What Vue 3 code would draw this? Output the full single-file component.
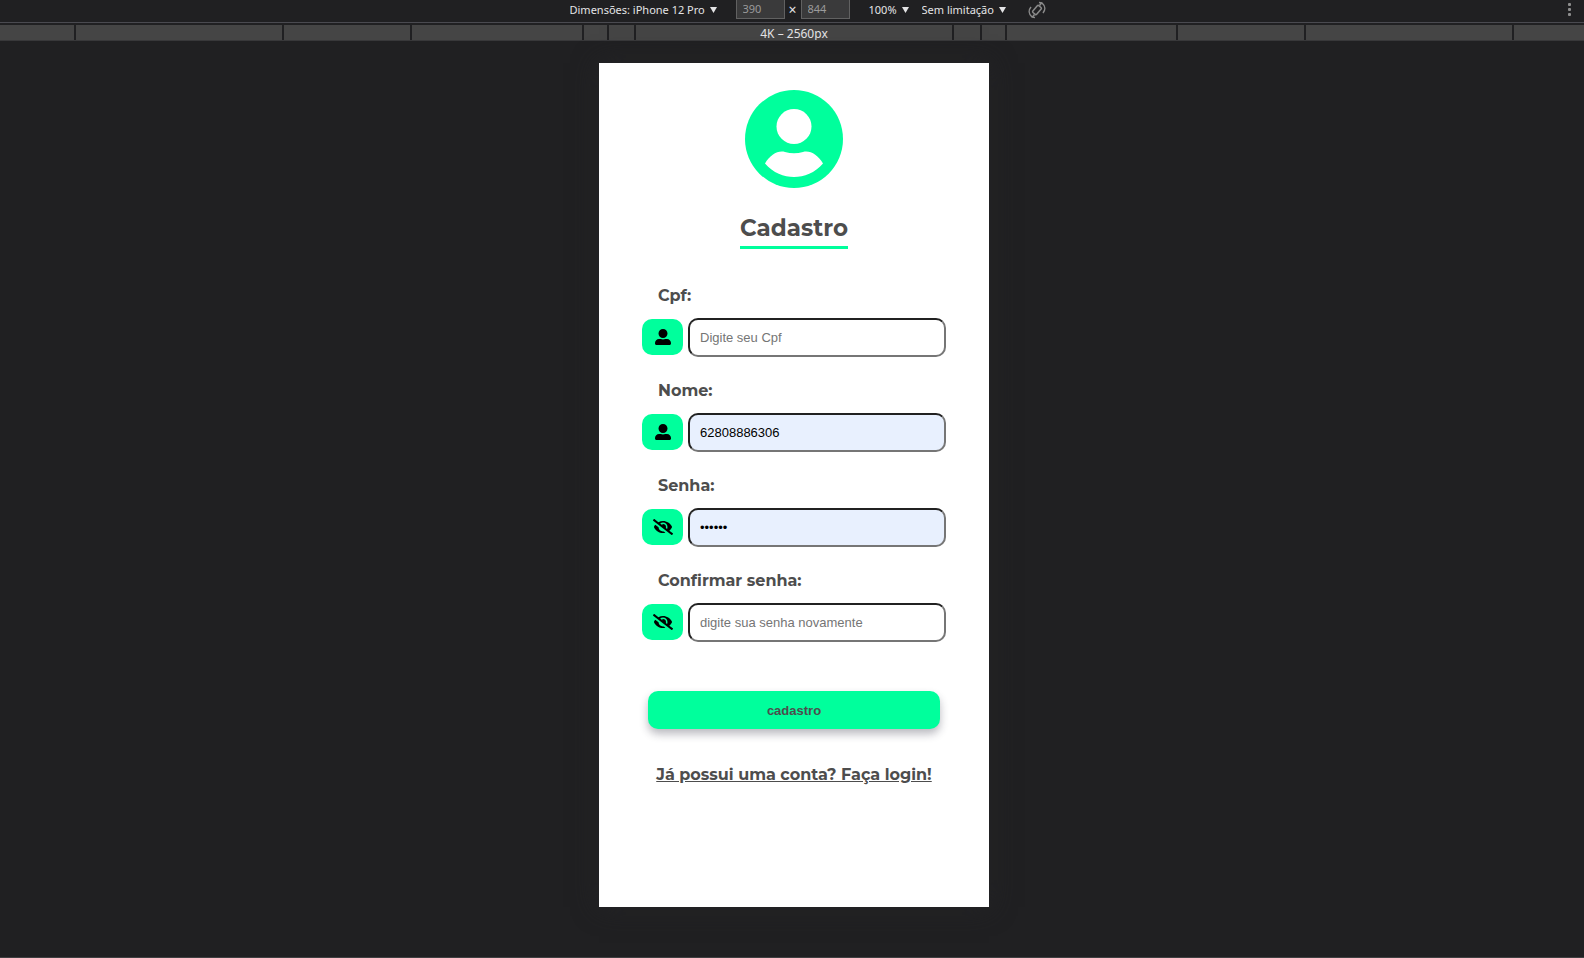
<script setup>
import { ref } from 'vue'

const widthPx = ref('390')
const heightPx = ref('844')

const fields = ref([
  { id: 'cpf', label: 'Cpf:', type: 'text', icon: 'user', placeholder: 'Digite seu Cpf', value: '', filled: false },
  { id: 'nome', label: 'Nome:', type: 'text', icon: 'user', placeholder: '', value: '62808886306', filled: true },
  { id: 'senha', label: 'Senha:', type: 'password', icon: 'eye', placeholder: '', value: '123456', filled: true },
  { id: 'confirmar', label: 'Confirmar senha:', type: 'password', icon: 'eye', placeholder: 'digite sua senha novamente', value: '', filled: false },
])
</script>

<template>
  <div class="devtools">
    <header class="toolbar">
      <div class="tools">
        <label class="drop device">
          <select aria-label="Dimensões"><option>Dimensões: iPhone 12 Pro</option></select>
          <svg class="arrow" viewBox="0 0 7 6"><path d="M0 0h7L3.5 6z" /></svg>
        </label>
        <div class="size">
          <input v-model="widthPx" aria-label="Largura" />
          <span class="times">×</span>
          <input v-model="heightPx" aria-label="Altura" />
        </div>
        <label class="drop zoom">
          <select aria-label="Zoom"><option>100%</option></select>
          <svg class="arrow" viewBox="0 0 7 6"><path d="M0 0h7L3.5 6z" /></svg>
        </label>
        <label class="drop throttle">
          <select aria-label="Limitação"><option>Sem limitação</option></select>
          <svg class="arrow" viewBox="0 0 7 6"><path d="M0 0h7L3.5 6z" /></svg>
        </label>
        <button class="rotate" aria-label="Girar">
          <svg viewBox="0 0 18 18" fill="none" stroke="#8a8a8a" stroke-width="1.5">
            <rect x="6.500" y="4.500" width="5" height="9" rx="1" transform="rotate(40 9 9)" />
            <path d="M3 6C0.500 9 0.500 13 4 16l3 0.500M4 16.500L6.500 13.500M15 12c2.500-3 2.500-7-1-10l-3-0.500M14 1.500L11.500 4.500" />
          </svg>
        </button>
      </div>
      <button class="more" aria-label="Mais opções"><i></i><i></i><i></i></button>
    </header>

    <div class="ruler">
      <span v-for="n in 13" :key="n">{{ n === 7 ? '4K – 2560px' : '' }}</span>
    </div>

    <main class="stage">
      <section class="phone">
        <svg class="avatar" viewBox="0 0 98 98">
          <circle cx="49" cy="49" r="49" fill="#00ff9c" />
          <circle cx="49" cy="36.500" r="17.500" fill="#fff" />
          <path d="M20 73.500C25 65 33 60 40 62q9 2.600 18 0c7-2 15 3 20 11.500C70 83 59 87 49 87S28 83 20 73.500z" fill="#fff" />
        </svg>
        <h1>Cadastro</h1>

        <form @submit.prevent>
          <div v-for="f in fields" :key="f.id" class="field">
            <label :for="f.id">{{ f.label }}</label>
            <div class="row">
              <span class="badge">
                <svg v-if="f.icon === 'user'" class="user" viewBox="0 0 512 512">
                  <path d="M256 288c79.500 0 144-64.500 144-144S335.500 0 256 0 112 64.500 112 144s64.500 144 144 144zm128 32h-55.100c-22.200 10.200-46.900 16-72.900 16s-50.600-5.800-72.900-16H128C57.300 320 0 377.300 0 448v16c0 26.500 21.500 48 48 48h416c26.500 0 48-21.500 48-48v-16c0-70.700-57.300-128-128-128z" />
                </svg>
                <svg v-else class="eye" viewBox="0 0 640 512">
                  <path d="M320 400c-75.850 0-137.250-58.710-142.900-133.110L72.200 185.820c-13.790 17.300-26.480 35.590-36.720 55.590a32.350 32.350 0 0 0 0 29.190C89.710 376.410 197.070 448 320 448c26.910 0 52.870-4 77.890-10.460L346 397.390a144.130 144.130 0 0 1-26 2.610zm313.820 58.100l-110.550-85.440a331.250 331.250 0 0 0 81.250-102.070 32.350 32.350 0 0 0 0-29.190C550.290 135.590 442.930 64 320 64a308.150 308.150 0 0 0-147.320 37.700L45.460 3.370A16 16 0 0 0 23 6.180L3.370 31.450A16 16 0 0 0 6.180 53.900l588.360 454.730a16 16 0 0 0 22.460-2.810l19.640-25.270a16 16 0 0 0-2.820-22.450zm-183.720-142l-39.300-30.380A94.750 94.750 0 0 0 416 256a94.760 94.760 0 0 0-121.310-92.210A47.650 47.650 0 0 1 304 192a46.640 46.640 0 0 1-1.540 10l-73.610-56.890A142.310 142.310 0 0 1 320 112a143.920 143.920 0 0 1 144 144c0 21.630-5.290 41.790-13.900 60.110z" />
                </svg>
              </span>
              <input
                :id="f.id"
                v-model="f.value"
                :type="f.type"
                :placeholder="f.placeholder"
                :class="{ filled: f.filled }"
                autocomplete="off"
              />
            </div>
          </div>
          <button class="submit" type="submit">cadastro</button>
        </form>

        <a class="login" href="#login">Já possui uma conta? Faça login!</a>
      </section>
    </main>
  </div>
</template>

<style>
body {
  background: #202022;
}
</style>

<style scoped>
* {
  box-sizing: border-box;
}
.devtools {
  display: flex;
  flex-direction: column;
  min-height: 100vh;
  background: #202022;
  border-bottom: 1px solid #404042;
  font-family: "Segoe UI", "Noto Sans", sans-serif;
  font-size: 12px;
  color: #e4e4e6;
}
button {
  border: 0;
  padding: 0;
  background: none;
  cursor: pointer;
}
.toolbar {
  display: flex;
  align-items: flex-start;
  height: 23px;
  padding-left: 47px;
  padding-right: 13px;
  border-bottom: 1px solid #4a4a50;
}
.tools {
  flex: 1;
  display: flex;
  justify-content: center;
  align-items: center;
  height: 20px;
}
.drop {
  display: flex;
  align-items: center;
  gap: 4px;
}
.drop select {
  appearance: none;
  border: 0;
  padding: 0;
  background: transparent;
  color: inherit;
  font: inherit;
  font-size: 11px;
  line-height: 18px;
}
.arrow {
  width: 7px;
  height: 6px;
  fill: #e4e4e6;
}
.size {
  display: flex;
  align-items: flex-start;
  margin: 0 19px;
}
.size input {
  width: 49px;
  height: 20px;
  padding: 0 6px;
  border: 1px solid #616161;
  border-top: 0;
  background: #3a3a3b;
  color: #9b9b9b;
  font: inherit;
  font-size: 11px;
}
.times {
  width: 16px;
  text-align: center;
  font-size: 14px;
  line-height: 22px;
}
.throttle {
  margin-left: 13px;
}
.rotate {
  margin-left: 22px;
  width: 18px;
  height: 18px;
}
.rotate svg {
  display: block;
}
.more {
  display: flex;
  flex-direction: column;
  gap: 2px;
  padding-top: 3px;
}
.more i {
  width: 3px;
  height: 3px;
  border-radius: 1px;
  background: #8e8e8e;
}
.ruler {
  display: grid;
  grid-template-columns: calc(50% - 718px) 206px 126px 170px 23px 25px 316px 26px 23px 169px 126px 206px 1fr;
  column-gap: 2px;
  margin-top: 2px;
  height: 16px;
  border-bottom: 1px solid #38383a;
  overflow: hidden;
}
.ruler span {
  background: #454545;
  text-align: center;
  line-height: 17px;
}
.stage {
  flex: 1;
  display: flex;
  justify-content: center;
  align-items: flex-start;
  padding: 22px 0 50px 4px;
}
.phone {
  display: flex;
  flex-direction: column;
  align-items: center;
  width: 390px;
  min-height: 844px;
  padding-top: 27px;
  background: #fff;
  box-shadow: 0 0 24px #242426;
  color: #4d4d4d;
  font-family: Montserrat, Inter, sans-serif;
}
.avatar {
  width: 98px;
  height: 98px;
}
h1 {
  margin: 25px 0 32px;
  padding-bottom: 3px;
  border-bottom: 3px solid #00ff9c;
  font-size: 23px;
  line-height: 30px;
  font-weight: 700;
}
form {
  display: flex;
  flex-direction: column;
  align-items: center;
}
.field {
  height: 95px;
}
.field label {
  display: block;
  padding-left: 16px;
  margin-bottom: 8px;
  font-size: 16px;
  line-height: 29px;
  font-weight: 700;
}
.row {
  display: flex;
  align-items: center;
  gap: 5px;
}
.badge {
  display: flex;
  align-items: center;
  justify-content: center;
  width: 41px;
  height: 36px;
  margin-bottom: 2px;
  border-radius: 10px;
  background: #00ff9c;
}
.user {
  width: 16px;
  height: 16px;
}
.eye {
  width: 20px;
  height: 16px;
}
.row input {
  width: 258px;
  height: 39px;
  padding: 0 10px;
  border: 2px solid #767676;
  border-top-color: #212121;
  border-left-color: #212121;
  border-radius: 10px;
  background: #fff;
  color: #000;
  font-family: Arial, "Liberation Sans", sans-serif;
  font-size: 13px;
}
.row input::placeholder {
  color: #757575;
}
.row input.filled {
  background: #e8f0fe;
}
.submit {
  width: 292px;
  height: 38px;
  margin-top: 30px;
  border-radius: 10px;
  background: #00ff9c;
  box-shadow: 0 5px 8px rgba(40, 40, 60, 0.32);
  color: #4d4d4d;
  font: 700 13px Arial, "Liberation Sans", sans-serif;
}
.login {
  margin-top: 34px;
  color: #4d4d4d;
  font-size: 16px;
  line-height: 24px;
  font-weight: 700;
}
</style>
